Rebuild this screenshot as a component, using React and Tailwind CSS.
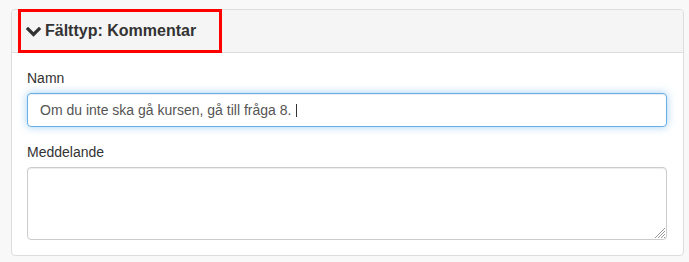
export default function App() {
  return (
    <div
      className="min-h-screen w-full bg-[#f8f8f8] pt-[9px] pl-[11px]"
      style={{ fontFamily: '"Liberation Sans", Arial, Helvetica, sans-serif' }}
    >
      <div className="relative w-[673px] rounded border border-[#dddddd] bg-white">
        <div className="flex h-[43px] items-center gap-[4px] rounded-t border-b border-[#dddddd] bg-[#f5f5f5] pl-[14px]">
          <svg width="15" height="10" viewBox="0 0 15 10" className="mt-[1px]">
            <polyline
              points="2,2 7.5,7.5 13,2"
              fill="none"
              stroke="#333333"
              strokeWidth="3.2"
              strokeLinecap="square"
            />
          </svg>
          <h3 className="text-[16px] font-bold leading-none text-[#333333]">Fälttyp: Kommentar</h3>
        </div>
        <div className="p-[15px]">
          <div className="mb-[15px]">
            <div className="mb-[5px] text-[14px] leading-[20px] text-[#333333]">Namn</div>
            <div className="flex h-[34px] w-[640px] items-center rounded border border-[#66afe9] bg-white px-[12px] text-[14px] text-[#555555] shadow-[inset_0_1px_1px_rgba(0,0,0,0.075),0_0_8px_rgba(102,175,233,0.6)]">
              <span className="whitespace-pre">Om du inte ska gå kursen, gå till fråga 8. </span>
              <span className="ml-[1px] h-[13px] w-px bg-[#333333]" />
            </div>
          </div>
          <div>
            <div className="mb-[5px] text-[14px] leading-[20px] text-[#333333]">Meddelande</div>
            <div className="relative h-[73px] w-[640px] rounded border border-[#cccccc] bg-white shadow-[inset_0_1px_1px_rgba(0,0,0,0.075)]">
              <svg width="11" height="11" viewBox="0 0 11 11" className="absolute bottom-[1px] right-[1px]">
                <line x1="1" y1="11" x2="11" y2="1" stroke="#9a9a9a" strokeWidth="1" />
                <line x1="4" y1="11" x2="11" y2="4" stroke="#9a9a9a" strokeWidth="1" />
                <line x1="7" y1="11" x2="11" y2="7" stroke="#9a9a9a" strokeWidth="1" />
                <line x1="10" y1="11" x2="11" y2="10" stroke="#9a9a9a" strokeWidth="1" />
              </svg>
            </div>
          </div>
        </div>
        <div className="pointer-events-none absolute left-[6px] top-[-1px] h-[44px] w-[204px] border-[3px] border-[#ff0000]" />
      </div>
    </div>
  );
}
